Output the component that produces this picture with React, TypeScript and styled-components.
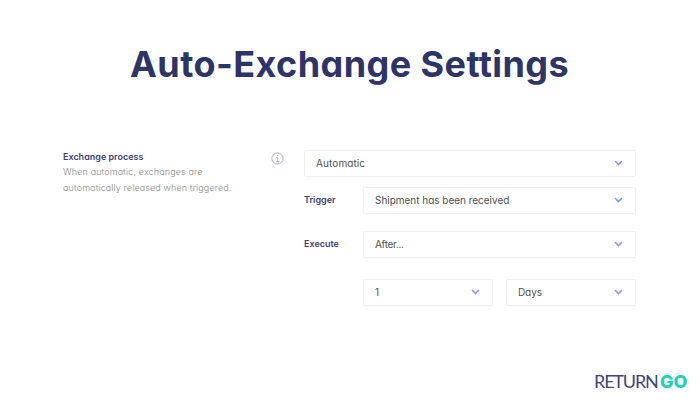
import React from "react";
import styled, { createGlobalStyle } from "styled-components";

const GlobalStyle = createGlobalStyle`
  *, *::before, *::after { box-sizing: border-box; }
  body {
    margin: 0;
    background: #fff;
    font-family: Inter, "Open Sans", sans-serif;
    font-feature-settings: "cv11";
  }
`;

const Page = styled.main`
  display: flex;
  flex-direction: column;
  width: 700px;
  height: 400px;
  overflow: hidden;
  background: #fff;
`;

const Title = styled.h1`
  margin: 0;
  padding: 43px 0 0 130px;
  height: 150px;
  font-size: 36px;
  line-height: 42px;
  font-weight: 700;
  letter-spacing: 0.43px;
  white-space: nowrap;
  color: #2d3467;
`;

const Setting = styled.section`
  display: flex;
  height: 220px;
  padding-left: 63px;
`;

const Description = styled.div`
  width: 208px;
  padding-top: 1px;
  white-space: nowrap;
`;

const Heading = styled.h2`
  margin: 0 0 1px;
  font-size: 9px;
  line-height: 12px;
  font-weight: 600;
  color: #3c3f78;
`;

const Hint = styled.p`
  margin: 0;
  font-size: 9px;
  line-height: 16px;
  font-weight: 300;
  letter-spacing: 0.12px;
  color: #888;
`;

const InfoIcon = styled.svg`
  flex: none;
  width: 13px;
  height: 13px;
  margin: 2px 20px 0 0;
  fill: none;
  stroke: #a3add9;
`;

const Form = styled.div`
  width: 332px;
`;

const Row = styled.div<{ $top?: number }>`
  display: flex;
  align-items: center;
  gap: 13px;
  margin-top: ${(p) => p.$top ?? 0}px;
`;

const Label = styled.span`
  flex: none;
  width: 46px;
  padding-bottom: 2px;
  font-size: 9px;
  line-height: 12px;
  font-weight: 600;
  color: #3c3f78;
`;

const Field = styled.button`
  display: flex;
  flex: 1;
  align-items: center;
  justify-content: space-between;
  height: 27px;
  padding: 0 12px 1px 11px;
  border: 1px solid #f0f0f0;
  border-radius: 2px;
  background: #fff;
  font: inherit;
  font-feature-settings: inherit;
`;

const Value = styled.span<{ $spacing?: number }>`
  font-size: 10px;
  line-height: 14px;
  letter-spacing: ${(p) => p.$spacing ?? 0}px;
  color: #505050;
`;

const Chevron = styled.svg`
  width: 9px;
  height: 6px;
  fill: none;
  stroke: #8299f0;
  stroke-width: 1.6;
`;

const Brand = styled.footer`
  display: flex;
  align-items: baseline;
  gap: 3px;
  padding-left: 594px;
  line-height: 23px;
  white-space: nowrap;
`;

const BrandLight = styled.span`
  width: 63px;
  font-family: Lato, sans-serif;
  font-size: 18px;
  letter-spacing: -1.15px;
  color: #40457c;
`;

const BrandBold = styled.span`
  font-size: 18px;
  font-weight: 800;
  color: #22d0b7;
`;

function Select({ value, spacing }: { value: string; spacing?: number }) {
  return (
    <Field type="button">
      <Value $spacing={spacing}>{value}</Value>
      <Chevron viewBox="0 0 9 6">
        <path d="M1 1 4.5 4.5 8 1" />
      </Chevron>
    </Field>
  );
}

export default function App() {
  return (
    <>
      <GlobalStyle />
      <Page>
        <Title>Auto-Exchange Settings</Title>
        <Setting>
          <Description>
            <Heading>Exchange process</Heading>
            <Hint>
              When automatic, exchanges are
              <br />
              automatically released when triggered.
            </Hint>
          </Description>
          <InfoIcon viewBox="0 0 13 13">
            <circle cx="6.5" cy="6.5" r="5.6" />
            <path d="M5.2 5.5h1.5V9.5M5 9.5h3.2M6.1 3.6h1" />
          </InfoIcon>
          <Form>
            <Row>
              <Select value="Automatic" spacing={0.1} />
            </Row>
            <Row $top={10}>
              <Label>Trigger</Label>
              <Select value="Shipment has been received" spacing={-0.02} />
            </Row>
            <Row $top={17}>
              <Label>Execute</Label>
              <Select value="After..." spacing={-0.3} />
            </Row>
            <Row $top={21}>
              <Label />
              <Select value="1" />
              <Select value="Days" spacing={-0.1} />
            </Row>
          </Form>
        </Setting>
        <Brand>
          <BrandLight>RETURN</BrandLight>
          <BrandBold>GO</BrandBold>
        </Brand>
      </Page>
    </>
  );
}
